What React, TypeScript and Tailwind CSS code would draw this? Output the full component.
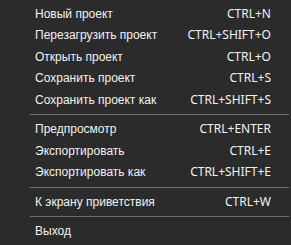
import React from 'react';

type Item = { label: string; shortcut?: string } | 'sep';

const items: Item[] = [
  { label: 'Новый проект', shortcut: 'CTRL+N' },
  { label: 'Перезагрузить проект', shortcut: 'CTRL+SHIFT+O' },
  { label: 'Открыть проект', shortcut: 'CTRL+O' },
  { label: 'Сохранить проект', shortcut: 'CTRL+S' },
  { label: 'Сохранить проект как', shortcut: 'CTRL+SHIFT+S' },
  'sep',
  { label: 'Предпросмотр', shortcut: 'CTRL+ENTER' },
  { label: 'Экспортировать', shortcut: 'CTRL+E' },
  { label: 'Экспортировать как', shortcut: 'CTRL+SHIFT+E' },
  'sep',
  { label: 'К экрану приветствия', shortcut: 'CTRL+W' },
  'sep',
  { label: 'Выход' },
];

const App = () => {
  return (
    <div className="w-[291px] h-[245px] bg-[#2b2b2b] pt-[3px] text-[12px] text-[#f2f2f2] overflow-hidden">
      {items.map((item, i) =>
        item === 'sep' ? (
          <div key={i} className="h-[8px] flex items-center pl-[30px] pr-[2px]">
            <div className="h-px w-full bg-[#6e6e6e]" />
          </div>
        ) : (
          <div
            key={i}
            className="h-[21.5px] flex items-center justify-between pl-[35px] pr-[20px] leading-none"
          >
            <span className="font-['Liberation_Sans',sans-serif]">{item.label}</span>
            {item.shortcut && (
              <span className="font-['Noto_Sans',sans-serif]">{item.shortcut}</span>
            )}
          </div>
        )
      )}
    </div>
  );
};

export default App;
